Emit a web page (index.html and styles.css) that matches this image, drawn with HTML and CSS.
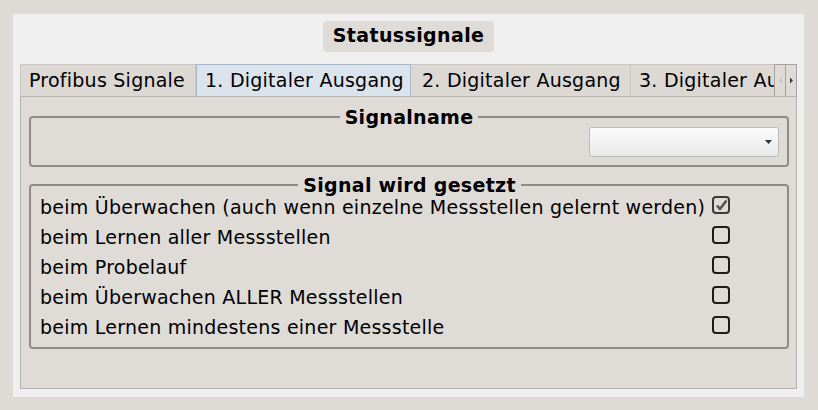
FILE: index.html
```html
<!DOCTYPE html>
<html lang="de">
<head>
<meta charset="utf-8">
<title>Statussignale</title>
<link rel="stylesheet" href="styles.css">
</head>
<body>
<div class="panel">
  <div class="title">Statussignale</div>
  <div class="tabwidget">
    <div class="tabbar">
      <div class="tab t1">Profibus Signale</div>
      <div class="tab t2 active">1. Digitaler Ausgang</div>
      <div class="tab t3">2. Digitaler Ausgang</div>
      <div class="tab t4">3. Digitaler Ausgang</div>
      <div class="scroll">
        <span class="sbtn"><svg width="5" height="7" viewBox="0 0 5 7"><path d="M4 0.5 L1 3.5 L4 6.5 Z" fill="#c8c4c0"/></svg></span>
        <span class="sbtn"><svg width="5" height="7" viewBox="0 0 5 7"><path d="M1 0.5 L4 3.5 L1 6.5 Z" fill="#3a3a3a"/></svg></span>
      </div>
    </div>
    <div class="pane">
      <fieldset class="group g1">
        <legend>Signalname</legend>
        <div class="combo">
          <svg class="arrow" width="7" height="4" viewBox="0 0 7 4"><path d="M0 0 H7 L3.5 4 Z" fill="#333"/></svg>
        </div>
      </fieldset>
      <fieldset class="group g2">
        <legend>Signal wird gesetzt</legend>
        <div class="rows">
          <span class="label">beim Überwachen (auch wenn einzelne Messstellen gelernt werden)</span>
          <span class="check checked"><svg width="13" height="13" viewBox="0 0 13 13"><path d="M2 6.5 L5 10 L11.5 1.5" fill="none" stroke="#555" stroke-width="2.6" stroke-linejoin="round"/></svg></span>
          <span class="label">beim Lernen aller Messstellen</span>
          <span class="check"></span>
          <span class="label">beim Probelauf</span>
          <span class="check"></span>
          <span class="label">beim Überwachen ALLER Messstellen</span>
          <span class="check"></span>
          <span class="label">beim Lernen mindestens einer Messstelle</span>
          <span class="check"></span>
        </div>
      </fieldset>
    </div>
  </div>
</div>
</body>
</html>
```
FILE: styles.css
```css
html, body {
  margin: 0;
  padding: 0;
}
body {
  background: #dedad6;
  font-family: "DejaVu Sans", "Liberation Sans", sans-serif;
  font-size: 19px;
  letter-spacing: 0.24px;
  color: #000;
  width: 818px;
  height: 410px;
  overflow: hidden;
}
.panel {
  box-sizing: border-box;
  margin: 14px 14px 0 13px;
  width: 791px;
  height: 383px;
  background: #efefef;
  padding: 7px 7px 8px 7px;
  display: flex;
  flex-direction: column;
}
.title {
  align-self: center;
  height: 31px;
  line-height: 29px;
  padding: 0 6px;
  box-sizing: border-box;
  width: 171px;
  text-align: center;
  background: #dfdbd7;
  border-radius: 4px;
  font-weight: bold;
  letter-spacing: 0.38px;
  white-space: nowrap;
}
.tabwidget {
  margin-top: 12px;
  flex: 1;
  display: flex;
  flex-direction: column;
}
.tabbar {
  display: flex;
  height: 32px;
}
.tab {
  box-sizing: border-box;
  height: 32px;
  line-height: 30px;
  padding: 0 8px;
  background: #dcd8d4;
  border: 1px solid #c9c5c1;
  border-bottom: none;
  border-left: none;
  white-space: nowrap;
  overflow: hidden;
  flex: none;
}
.t1 {
  width: 176px;
  border-left: 1px solid #c9c5c1;
}
.t2 { width: 215px; }
.t3 {
  width: 220px;
  padding-left: 11px;
}
.t4 {
  flex: 1;
  min-width: 0;
  border-right: none;
}
.tab.active {
  background: #dbe4ec;
  border: 1px solid #a9b8c6;
  border-bottom: none;
}
.scroll {
  display: flex;
  width: 23px;
  height: 33px;
  flex: none;
  box-sizing: border-box;
  border: 1px solid #a6a29e;
  border-bottom: 1px solid #8e8a86;
  background: #dedad6;
}
.sbtn {
  flex: 1;
  display: flex;
  align-items: center;
  justify-content: center;
}
.sbtn + .sbtn {
  border-left: 1px solid #a6a29e;
}
.pane {
  flex: 1;
  box-sizing: border-box;
  background: #dfdbd7;
  border: 1px solid #b5b1ad;
  padding: 13px 7px 0 8px;
  display: flex;
  flex-direction: column;
}
.group {
  margin: 0;
  min-inline-size: 0;
  border: 2px solid #8e8b88;
  border-radius: 4px;
}
.group legend {
  margin: 0 auto;
  padding: 0 5px;
  font-weight: bold;
  letter-spacing: 0.3px;
  line-height: 14px;
}
.g1 {
  padding: 3px 8px 8px 8px;
  display: flex;
  justify-content: flex-end;
}
.combo {
  box-sizing: border-box;
  width: 190px;
  height: 30px;
  border: 1px solid #bcbab8;
  border-radius: 3px;
  background: linear-gradient(#fbfbfb, #e9e9e9);
  display: flex;
  align-items: center;
  justify-content: flex-end;
  padding-right: 6px;
}
.g2 {
  margin-top: 11px;
  padding: 0 8px 5px 9px;
}
.rows {
  display: grid;
  grid-template-columns: auto auto;
  justify-content: start;
  column-gap: 7px;
  grid-auto-rows: 30px;
  align-items: center;
  line-height: 30px;
}
.label {
  white-space: nowrap;
}
.check {
  box-sizing: border-box;
  width: 18px;
  height: 18px;
  border: 2px solid #1c1c1c;
  border-radius: 4px;
  margin-bottom: 4px;
  display: flex;
  align-items: center;
  justify-content: center;
}
.check.checked {
  border-color: #3a3a3a;
}
```
